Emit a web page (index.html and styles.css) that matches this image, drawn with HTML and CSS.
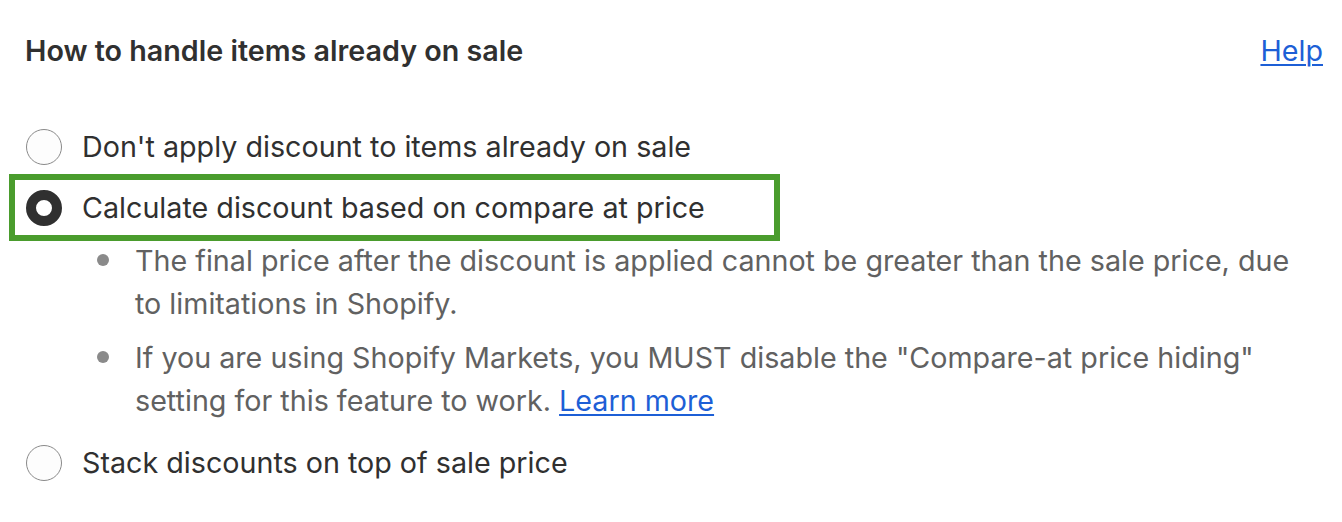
FILE: index.html
```html
<!DOCTYPE html>
<html lang="en">
<head>
  <meta charset="UTF-8">
  <meta name="viewport" content="width=device-width, initial-scale=1.0">
  <title>Sale items</title>
  <link rel="stylesheet" href="styles.css">
</head>
<body>
  <div class="section">
    <div class="section-header">
      <h2>How to handle items already on sale</h2>
      <a href="#" class="link">Help</a>
    </div>

    <div class="choices">
      <label class="choice">
        <span class="radio"></span>
        <span class="choice-label">Don't apply discount to items already on sale</span>
      </label>
      <label class="choice choice-highlight">
        <span class="radio radio-checked"></span>
        <span class="choice-label">Calculate discount based on compare at price</span>
      </label>
      <ul class="notes">
        <li>The final price after the discount is applied cannot be greater than the sale price, due to limitations in Shopify.</li>
        <li>If you are using Shopify Markets, you MUST disable the "Compare-at price hiding" setting for this feature to work. <a href="#" class="link">Learn more</a></li>
      </ul>
      <label class="choice">
        <span class="radio"></span>
        <span class="choice-label">Stack discounts on top of sale price</span>
      </label>
    </div>
  </div>
</body>
</html>
```

FILE: styles.css
```css
body {
  margin: 0;
  background-color: #fff;
  font-family: Inter, "Noto Sans", sans-serif;
  font-size: 28.7px;
  line-height: 43px;
  color: #303030;
}

.section {
  padding: 29px 19px 0 25px;
}

.section-header {
  display: flex;
  justify-content: space-between;
  align-items: center;
}

.section-header h2 {
  margin: 0;
  font-size: 28.7px;
  font-weight: 600;
}

.link {
  color: #1d5fd6;
  text-decoration: underline;
  text-underline-offset: 3px;
  text-decoration-thickness: 2px;
}

.choices {
  margin-top: 44px;
}

.choice {
  display: flex;
  align-items: center;
  gap: 20px;
  height: 61px;
  position: relative;
}

.choice-highlight {
  outline: 6px solid #4a9c2d;
  outline-offset: -3px;
  margin-left: -13px;
  padding-left: 13px;
  width: 752px;
}

.radio {
  width: 36px;
  height: 36px;
  box-sizing: border-box;
  border-radius: 50%;
  border: 1.5px solid #8a8a8a;
  background: #fdfdfd;
  flex-shrink: 0;
  margin-left: 1px;
}

.radio-checked {
  border: 10px solid #303030;
  background: #fff;
}

.notes {
  list-style: none;
  margin: 0 0 10px;
  padding: 1px 0 0 110px;
  color: #616161;
}

.notes li {
  position: relative;
  margin-bottom: 11px;
}

.notes li:last-child {
  margin-bottom: 0;
}

.notes li::before {
  content: "";
  position: absolute;
  left: -38px;
  top: 15px;
  width: 12px;
  height: 12px;
  border-radius: 50%;
  background: #8a8a8a;
}
```
